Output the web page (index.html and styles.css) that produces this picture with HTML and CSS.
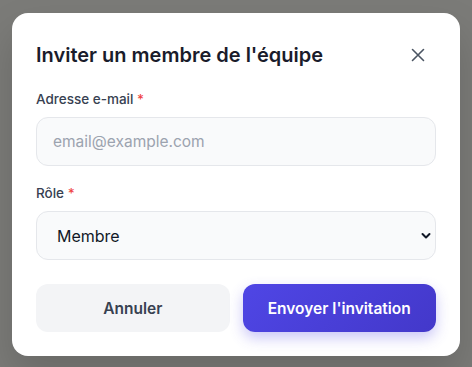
FILE: index.html
```html
<!DOCTYPE html>
<html lang="fr">
<head>
<meta charset="utf-8">
<link rel="stylesheet" href="styles.css">
</head>
<body>
<div class="overlay">
  <div class="modal">
    <div class="header">
      <h2 class="title">Inviter un membre de l'équipe</h2>
      <button class="close" aria-label="Fermer">
        <svg width="14" height="14" viewBox="0 0 14 14" fill="none" stroke="#4b5563" stroke-width="1.6" stroke-linecap="round"><path d="M1.5 1.5l11 11M12.5 1.5l-11 11"/></svg>
      </button>
    </div>
    <div class="field">
      <label class="label">Adresse e-mail <span class="req">*</span></label>
      <input class="input" type="email" placeholder="email@example.com">
    </div>
    <div class="field">
      <label class="label">Rôle <span class="req">*</span></label>
      <div class="select">
        <span>Membre</span>
        <svg width="10" height="8" viewBox="0 0 10 8" fill="none" stroke="#111827" stroke-width="2" stroke-linecap="round" stroke-linejoin="round"><path d="M1.5 2l3.5 3.5L8.5 2"/></svg>
      </div>
    </div>
    <div class="actions">
      <button class="btn btn-secondary">Annuler</button>
      <button class="btn btn-primary">Envoyer l'invitation</button>
    </div>
  </div>
</div>
</body>
</html>
```

FILE: styles.css
```css
* { box-sizing: border-box; }
html, body { margin: 0; padding: 0; }
body {
  background: #7b7b78;
  font-family: Inter, "DejaVu Sans", sans-serif;
  width: 472px;
  height: 367px;
  overflow: hidden;
}
.overlay {
  padding: 13px 12px;
}
.modal {
  width: 448px;
  height: 343px;
  background: #ffffff;
  border-radius: 16px;
  padding: 24px;
  display: flex;
  flex-direction: column;
  box-shadow: 0 20px 40px rgba(0,0,0,0.15);
}
.header {
  display: flex;
  align-items: center;
  justify-content: space-between;
  height: 36px;
  margin-bottom: 16px;
}
.title {
  margin: 0;
  font-size: 20px;
  font-weight: 600;
  color: #1a1c2b;
  letter-spacing: 0;
}
.close {
  width: 36px;
  height: 36px;
  border: none;
  background: transparent;
  display: flex;
  align-items: center;
  justify-content: center;
  padding: 0;
}
.field {
  display: flex;
  flex-direction: column;
  gap: 8px;
  margin-bottom: 17px;
}
.label {
  font-size: 13.5px;
  font-weight: 500;
  color: #374151;
  line-height: 20px;
}
.req { color: #ef4444; }
.input, .select {
  height: 49px;
  border: 1px solid #e5e7eb;
  border-radius: 12px;
  background: #f9fafb;
  font-family: inherit;
  font-size: 15.5px;
}
.input {
  padding: 0 16px;
  color: #111827;
  outline: none;
}
.input::placeholder { color: #9ca3af; }
.select {
  display: flex;
  align-items: center;
  justify-content: space-between;
  padding: 0 4px 0 20px;
  color: #111827;
  font-size: 16px;
}
.actions {
  margin-top: 7px;
  display: flex;
  gap: 13px;
}
.btn {
  flex: 1;
  height: 48px;
  border: none;
  border-radius: 12px;
  font-family: inherit;
  font-size: 15.5px;
  font-weight: 600;
}
.btn-secondary {
  background: #f3f4f6;
  color: #374151;
}
.btn-primary {
  background: linear-gradient(135deg, #4f46e5, #4338ca);
  color: #ffffff;
  box-shadow: 0 6px 14px rgba(79, 70, 229, 0.3);
}
```
